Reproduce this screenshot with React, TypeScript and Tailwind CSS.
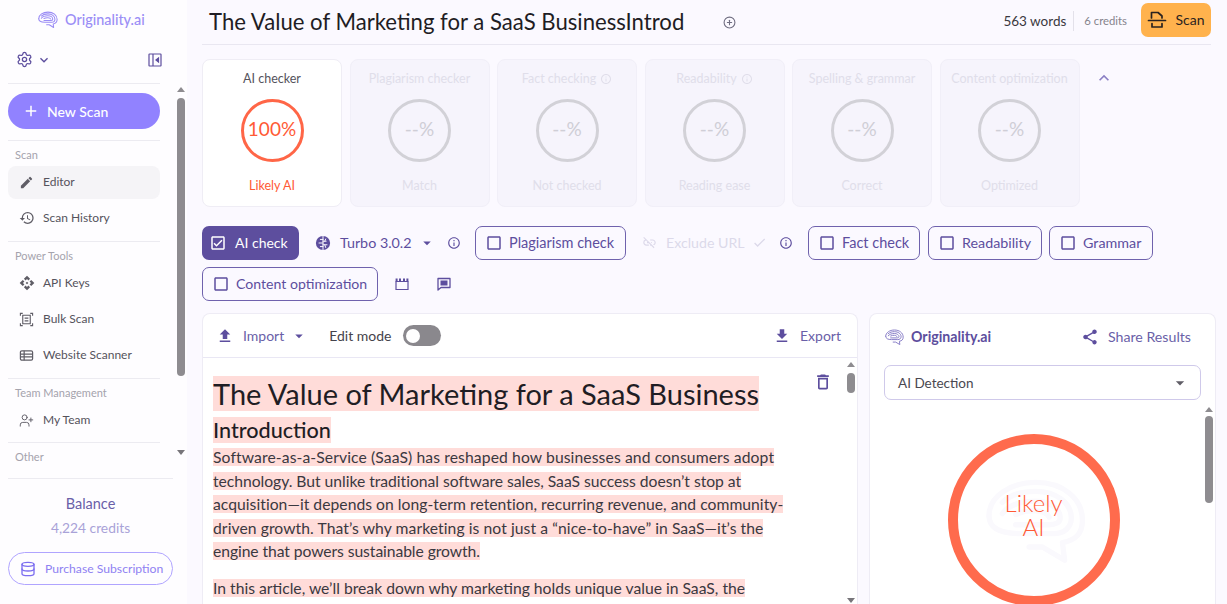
import React from "react";
import {
  MdEdit, MdHistory, MdApi, MdInfoOutline, MdLinkOff, MdCheck, MdFileUpload, MdFileDownload,
  MdOutlineCheckBox, MdCheckBoxOutlineBlank, MdOutlineDelete, MdShare, MdArrowDropDown, MdKeyboardArrowUp, MdKeyboardArrowDown, MdAdd,
} from "react-icons/md";
import { Database, CirclePlus, Settings, UserPlus } from "lucide-react";

function Brain({ className }: { className?: string }) {
  return (
    <svg viewBox="0 0 24 20" fill="none" stroke="currentColor" strokeWidth="1.2" strokeLinecap="round" strokeLinejoin="round" className={className}>
      <path d="M2 8.500C2 4 7 1 12.500 1C18.500 1 23 4.500 23 9.500C23 12.500 21.500 14 18.500 14.500L19 18.500L14 15.500H11" />
      <path d="M5 5.500C7 3.500 10 3 12.500 3C17 3 20.500 5.500 20.500 9C20.500 11 19 12.500 16.500 12.500H9C5 12.500 2 11.500 2 8.500" />
      <path d="M5 8C6.500 6 9.500 5.200 12.500 5.200C15.500 5.200 18 6.800 18 9C18 10 17 10.500 15.500 10.500H8" />
      <path d="M8 8.200C9.500 7.500 11 7.300 12.500 7.400C14 7.500 15.300 8 15.500 8.800" />
    </svg>
  );
}

function ScanIcon() {
  return (
    <svg viewBox="0 0 20 20" fill="none" stroke="#2a2320" strokeWidth="1.7" strokeLinecap="round" strokeLinejoin="round" className="h-[20px] w-[20px]">
      <path d="M4.500 8V2.500H11L15 6V8" />
      <path d="M1.500 10.500H18.500" />
      <path d="M5 13.500V17H15V13.500" />
    </svg>
  );
}

function TurboIcon() {
  return (
    <svg viewBox="0 0 18 18" className="h-[16px] w-[16px]">
      <circle cx="9" cy="9" r="8" fill="#5d4e9e" />
      <path d="M9 1.500V16.500M9 5H6M9 9H4.500M9 13H6M9 7H12.500M9 11H13.500M12 4.500L11 7M12 14L11 11" stroke="#fbf9ff" strokeWidth="1.1" fill="none" strokeLinecap="round" />
    </svg>
  );
}

function BulkIcon() {
  return (
    <svg viewBox="0 0 16 16" fill="none" stroke="currentColor" strokeWidth="1.200" className="h-[15px] w-[15px]">
      <path d="M4 3.500H12V12.500H4Z" />
      <path d="M6 6.500H10M6 9.500H10" />
      <path d="M1.500 4V1.500H4M12 1.500H14.500V4M14.500 12V14.500H12M4 14.500H1.500V12" />
    </svg>
  );
}

function ListIcon() {
  return (
    <svg viewBox="0 0 16 16" fill="none" stroke="currentColor" strokeWidth="1.300" className="h-[15px] w-[15px]">
      <rect x="1.500" y="3" width="13" height="10" rx="1.500" />
      <path d="M1.500 6.500H14.500M1.500 9.500H14.500M5.500 3V13" />
    </svg>
  );
}

function Section({ label, items }: { label: string; items: { icon: React.ReactNode; text: string; active?: boolean }[] }) {
  return (
    <div className="border-t border-[#ecebf1]">
      <div className="h-[25px] pl-[7px] pt-[7px] text-[11px] leading-[14px] text-[#a5a3ad]">{label}</div>
      <div className="flex flex-col gap-[3px]">
        {items.map((it) => (
          <div key={it.text} className={`flex h-[33px] items-center rounded-[8px] pb-[1px] pl-[11px] text-[12px] text-[#55535c] ${it.active ? "bg-[#f5f4f7]" : ""}`}>
            <span className="flex w-[24px] items-center text-[#5f5d66]">{it.icon}</span>
            {it.text}
          </div>
        ))}
      </div>
    </div>
  );
}

function SideScrollbar({ className }: { className: string }) {
  return (
    <div className={`flex w-[9px] flex-col items-center ${className}`}>
      <div className="h-0 w-0 border-x-[4px] border-b-[5px] border-x-transparent border-b-[#8e8c90]" />
      <div className="mt-[6px] h-[278px] w-[8px] rounded-full bg-[#8e8c90]" />
      <div className="mt-[74px] h-0 w-0 border-x-[4px] border-t-[5px] border-x-transparent border-t-[#77757a]" />
    </div>
  );
}

function Sidebar() {
  return (
    <aside className="flex h-[604px] w-[187px] shrink-0 flex-col bg-[#fefdff]">
      <div className="flex h-[40px] items-center pl-[37px] text-[#9a8cf5]">
        <Brain className="h-[18px] w-[21px]" />
        <span className="ml-[7px] text-[14.400px] font-medium text-[#9b8ef6]">Originality.ai</span>
      </div>
      <div className="ml-[8px] flex h-[44px] w-[152px] items-center justify-between border-b border-[#ecebf1] pb-[4px] pl-[8px] text-[#5d4e9e]">
        <div className="flex items-center gap-[3px]">
          <Settings className="h-[17px] w-[17px]" strokeWidth={1.8} />
          <MdKeyboardArrowDown className="h-[16px] w-[16px]" />
        </div>
        <svg viewBox="0 0 14 14" fill="none" stroke="#5d4e9e" strokeWidth="1.2" className="-mr-[2px] h-[14px] w-[14px]">
          <rect x="1" y="1" width="12" height="12" rx="0.5" />
          <path d="M5 1V13" />
          <path d="M10.500 5L8 7L10.500 9Z" fill="#5d4e9e" />
        </svg>
      </div>
      <div className="flex h-[381px] overflow-hidden pl-[8px]">
        <div className="w-[152px] shrink-0">
          <div className="mb-[11px] mt-[9px] flex h-[36px] items-center rounded-full bg-[#9182ff] pl-[14px] text-[14px] font-medium text-white">
            <MdAdd className="mr-[7px] h-[18px] w-[18px]" />
            New Scan
          </div>
          <Section label="Scan" items={[
            { icon: <MdEdit className="h-[15px] w-[15px]" />, text: "Editor", active: true },
            { icon: <MdHistory className="h-[16px] w-[16px]" />, text: "Scan History" },
          ]} />
          <div className="h-[6px]" />
          <Section label="Power Tools" items={[
            { icon: <MdApi className="h-[16px] w-[16px]" />, text: "API Keys" },
            { icon: <BulkIcon />, text: "Bulk Scan" },
            { icon: <ListIcon />, text: "Website Scanner" },
          ]} />
          <div className="h-[6px]" />
          <Section label="Team Management" items={[
            { icon: <UserPlus className="h-[15px] w-[15px]" strokeWidth={1.5} />, text: "My Team" },
          ]} />
          <div className="h-[5px]" />
          <Section label="Other" items={[]} />
        </div>
        <SideScrollbar className="ml-[16px] mt-[3px]" />
      </div>
      <div className="ml-[8px] mt-[13px] flex w-[165px] flex-col items-center border-t border-[#ecebf1]">
        <div className="mt-[15px] text-[14.500px] leading-[20px] text-[#6a5fa8]">Balance</div>
        <div className="mt-[4px] text-[13.800px] leading-[20px] text-[#a9a2d8]">4,224 credits</div>
        <div className="mt-[14px] flex h-[33px] w-[165px] items-center rounded-full border border-[#b0a4ff] pl-[11px] pt-[1px] text-[12.200px] text-[#8f81f2]">
          <Database className="mr-[9px] h-[16px] w-[16px] text-[#7c6ef0]" strokeWidth={2} />
          Purchase Subscription
        </div>
      </div>
    </aside>
  );
}

const cards = [
  { title: "AI checker", label: "Likely AI" },
  { title: "Plagiarism checker", label: "Match" },
  { title: "Fact checking", label: "Not checked", info: true },
  { title: "Readability", label: "Reading ease", info: true },
  { title: "Spelling & grammar", label: "Correct" },
  { title: "Content optimization", label: "Optimized" },
];

function Cards() {
  return (
    <div className="mt-[14px] flex items-start gap-[7.500px]">
      {cards.map((c, i) => (
        <div key={c.title} className={`flex h-[148px] w-[140px] flex-col items-center rounded-[8px] border ${i === 0 ? "border-[#efedf5] bg-white" : "border-[#f1eff8] bg-[#f6f4fc]"}`}>
          <div className={`mt-[10px] flex h-[18px] items-center gap-[4px] text-[12.500px] leading-[18px] ${i === 0 ? "text-[#55535c]" : "text-[#e0deea]"}`}>
            {c.title}
            {c.info && <MdInfoOutline className="h-[12px] w-[12px]" />}
          </div>
          <div className={`mt-[11px] flex h-[63px] w-[63px] items-center justify-center rounded-full border-[3.500px] pb-[3px] text-[19px] ${i === 0 ? "border-[#ff6647] text-[#ff5a36]" : "border-[#d2d1d7] text-[#cfced6]"}`}>
            {i === 0 ? "100%" : "--%"}
          </div>
          <div className={`mt-[15px] text-[12.500px] leading-[18px] ${i === 0 ? "text-[#ff5a36]" : "text-[#e0deea]"}`}>{c.label}</div>
        </div>
      ))}
      <MdKeyboardArrowUp className="ml-[7px] mt-[9px] h-[20px] w-[20px] text-[#8a7fc4]" />
    </div>
  );
}

function CheckButton({ text, width, size }: { text: string; width: string; size: string }) {
  return (
    <div className={`flex h-[34px] items-center rounded-[7px] border border-[#6f62ad] pb-[1px] pl-[9px] text-[#5d4e9e] ${size} ${width}`}>
      <MdCheckBoxOutlineBlank className="mr-[6px] h-[18px] w-[18px]" />
      {text}
    </div>
  );
}

function Toolbar() {
  return (
    <div className="mt-[19px] flex flex-col gap-[7px] text-[14px] text-[#5d4e9e]">
      <div className="flex items-center">
        <div className="flex h-[34px] w-[97px] items-center rounded-[7px] bg-[#5d4e9e] pb-[1px] pl-[7px] text-white">
          <MdOutlineCheckBox className="mr-[8px] h-[18px] w-[18px]" />
          AI check
        </div>
        <div className="ml-[16px]"><TurboIcon /></div>
        <span className="ml-[9px] w-[72px] pb-[1px] text-[14.300px]">Turbo 3.0.2</span>
        <MdArrowDropDown className="ml-[6px] h-[18px] w-[18px]" />
        <MdInfoOutline className="ml-[11px] h-[14px] w-[14px]" />
        <div className="ml-[14px]"><CheckButton text="Plagiarism check" width="w-[151px]" size="text-[14.500px]" /></div>
        <div className="ml-[16px] flex items-center pb-[1px] text-[#dcd9ea]">
          <MdLinkOff className="mr-[9px] h-[15px] w-[15px]" />
          <span className="w-[79px] text-[14.200px]">Exclude URL</span>
          <MdCheck className="ml-[7px] h-[15px] w-[15px]" />
        </div>
        <MdInfoOutline className="ml-[12px] h-[14px] w-[14px]" />
        <div className="ml-[15px]"><CheckButton text="Fact check" width="w-[112px]" size="text-[14.500px]" /></div>
        <div className="ml-[8px]"><CheckButton text="Readability" width="w-[114px]" size="text-[14.300px]" /></div>
        <div className="ml-[7px]"><CheckButton text="Grammar" width="w-[104px]" size="text-[14.300px]" /></div>
      </div>
      <div className="flex items-center">
        <CheckButton text="Content optimization" width="w-[176px]" size="text-[14.100px]" />
        <svg viewBox="0 0 14 14" fill="none" stroke="#5d4e9e" strokeWidth="1.200" className="ml-[17px] h-[14px] w-[14px]">
          <path d="M1 4.500H13V12.500H1Z" />
          <path d="M1.600 4.500V1.500M5 4.500V1.500M9 4.500V1.500M12.400 4.500V1.500" strokeWidth="2" />
        </svg>
        <svg viewBox="0 0 14 14" className="ml-[28px] h-[14px] w-[14px]">
          <path d="M1 1.500H13V10.500H4L1 13Z" fill="none" stroke="#5d4e9e" strokeWidth="1.300" strokeLinejoin="round" />
          <path d="M3.500 3.500H10.500V8.500H3.500Z" fill="#5d4e9e" />
        </svg>
      </div>
    </div>
  );
}

const lines = [
  { t: "Software-as-a-Service (SaaS) has reshaped how businesses and consumers adopt", c: "tracking-[0.1px]" },
  { t: "technology. But unlike traditional software sales, SaaS success doesn’t stop at", c: "tracking-[-0.03px]" },
  { t: "acquisition—it depends on long-term retention, recurring revenue, and community-", c: "tracking-[0.03px]" },
  { t: "driven growth. That’s why marketing is not just a “nice-to-have” in SaaS—it’s the", c: "tracking-[0.07px]" },
  { t: "engine that powers sustainable growth.", c: "tracking-[-0.08px]" },
];

function Editor() {
  return (
    <section className="flex h-[291px] w-[656px] shrink-0 flex-col rounded-t-[8px] border border-b-0 border-[#eeecf5] bg-white">
      <div className="flex h-[44px] shrink-0 items-center border-b border-[#e9e7f4] pl-[13px] pr-[16px] text-[14px]">
        <MdFileUpload className="h-[18px] w-[18px] text-[#5d4e9e]" />
        <span className="ml-[9px] text-[#6a5fa8]">Import</span>
        <MdArrowDropDown className="ml-[6px] h-[18px] w-[18px] text-[#5d4e9e]" />
        <span className="ml-[21px] text-[#45434b]">Edit mode</span>
        <div className="ml-[11px] flex h-[21px] w-[38px] items-center rounded-full bg-[#8a888d] pl-[3px]">
          <div className="h-[14px] w-[14px] rounded-full bg-white" />
        </div>
        <MdFileDownload className="ml-auto h-[18px] w-[18px] text-[#5d4e9e]" />
        <span className="ml-[9px] text-[#6a5fa8]">Export</span>
      </div>
      <div className="flex min-h-0 flex-1 overflow-hidden">
        <div className="min-w-0 flex-1 pl-[10px] pt-[19px] text-[#1f1d24]">
          <div className="h-[34px] whitespace-nowrap text-[29px] leading-[34px]"><span className="bg-[#ffdcd9]">The Value of Marketing for a SaaS Business</span></div>
          <div className="mt-[5px] h-[26px] pt-[1px] text-[21.600px] font-medium leading-[26px]"><span className="bg-[#ffdcd9]">Introduction</span></div>
          <p className="mt-[4px] whitespace-nowrap text-[15.700px] leading-[23.500px] text-[#3a3840]">
            {lines.map((l) => (
              <React.Fragment key={l.t}><span className={`bg-[#ffdcd9] ${l.c}`}>{l.t}</span><br /></React.Fragment>
            ))}
          </p>
          <p className="mt-[13px] whitespace-nowrap text-[15.700px] leading-[23.500px] text-[#3a3840]">
            <span className="bg-[#ffdcd9]">In this article, we’ll break down why marketing holds unique value in SaaS, the</span>
          </p>
        </div>
        <MdOutlineDelete className="mr-[13px] mt-[14px] h-[20px] w-[20px] shrink-0 text-[#5d4e9e]" />
        <div className="mr-[2px] flex w-[9px] shrink-0 flex-col items-center pt-[4px]">
          <div className="h-0 w-0 border-x-[4px] border-b-[5px] border-x-transparent border-b-[#8e8c90]" />
          <div className="mt-[6px] h-[20px] w-[8px] rounded-full bg-[#8e8c90]" />
          <div className="mt-[205px] h-0 w-0 border-x-[4px] border-t-[5px] border-x-transparent border-t-[#77757a]" />
        </div>
      </div>
    </section>
  );
}

function Results() {
  return (
    <section className="ml-[11px] flex h-[291px] w-[347px] shrink-0 flex-col rounded-t-[8px] border border-b-0 border-[#eeecf5] bg-white pl-[14px]">
      <div className="mt-[13px] flex h-[20px] items-center pr-[24px]">
        <Brain className="h-[17px] w-[20px] text-[#8a80c8]" />
        <span className="ml-[7px] text-[14.200px] font-bold text-[#5d4e9e]">Originality.ai</span>
        <MdShare className="ml-auto h-[18px] w-[18px] text-[#5d4e9e]" />
        <span className="ml-[9px] text-[14.200px] text-[#6a5fa8]">Share Results</span>
      </div>
      <div className="mt-[18px] flex h-[35px] w-[317px] items-center justify-between rounded-[7px] border border-[#cfc9ea] pl-[13px] pr-[10px] pt-[1px] text-[13.500px] text-[#4a4850]">
        AI Detection
        <MdArrowDropDown className="h-[20px] w-[20px] text-[#5f5d66]" />
      </div>
      <div className="flex min-h-0 flex-1 overflow-hidden">
        <div className="flex w-[301px] shrink-0 justify-center pr-[2px] pt-[34px]">
          <div className="relative flex h-[172px] w-[172px] shrink-0 flex-col items-center justify-center rounded-full border-[10px] border-[#ff6b4d] pb-[10px] text-[24px] font-light leading-[24px] text-[#ff5a36]">
            <Brain className="absolute left-[22px] top-[34px] h-[89px] w-[107px] text-[#faf9fd]" />
            <span className="relative">Likely</span>
            <span className="relative">AI</span>
          </div>
        </div>
        <div className="ml-[19px] flex w-[9px] shrink-0 flex-col items-center pt-[7px]">
          <div className="h-0 w-0 border-x-[4px] border-b-[5px] border-x-transparent border-b-[#8e8c90]" />
          <div className="mt-[4px] h-[87px] w-[8px] rounded-full bg-[#8e8c90]" />
        </div>
      </div>
    </section>
  );
}

export default function App() {
  return (
    <div className="flex h-[604px] w-[1227px] overflow-hidden bg-[#fbf9ff] font-['Lato',sans-serif]">
      <Sidebar />
      <main className="min-w-0 flex-1 pl-[15px]">
        <div className="flex h-[45px] w-[1009px] items-center border-b border-[#e9e7f1] pl-[7px]">
          <h1 className="w-[475px] whitespace-nowrap text-[22.150px] text-[#1f1d24]">The Value of Marketing for a SaaS BusinessIntrod</h1>
          <CirclePlus className="ml-[39px] h-[13px] w-[13px] text-[#6f6d80]" />
          <span className="mb-[2px] ml-auto text-[13.500px] text-[#3a3840]">563 words</span>
          <span className="mb-[3px] ml-[7px] h-[20px] border-l border-[#e3e1ea]" />
          <span className="mb-[2px] ml-[10px] text-[11.300px] text-[#85838c]">6 credits</span>
          <div className="mb-[5px] ml-[14px] flex h-[34px] w-[70px] items-center justify-center gap-[8px] rounded-[7px] bg-[#ffb24d] text-[14px] text-[#2a2320]">
            <ScanIcon />
            Scan
          </div>
        </div>
        <Cards />
        <Toolbar />
        <div className="mt-[12px] flex">
          <Editor />
          <Results />
        </div>
      </main>
    </div>
  );
}
